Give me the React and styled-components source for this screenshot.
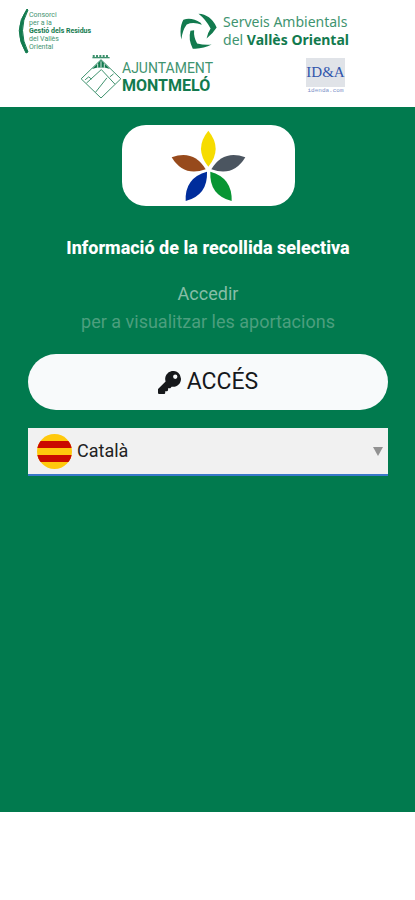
import React from "react";
import styled, { createGlobalStyle } from "styled-components";

const GlobalStyle = createGlobalStyle`
  * { box-sizing: border-box; }
  body {
    margin: 0;
    background: #fff;
    font-family: Roboto, "Liberation Sans", sans-serif;
  }
`;

const Page = styled.div`
  display: flex;
  flex-direction: column;
  min-height: 100vh;
`;

const Header = styled.header`
  display: flex;
  flex-direction: column;
  padding: 8px 0;
`;

const LogoRow = styled.div`
  display: flex;
  align-items: center;
  justify-content: space-between;
  padding: ${(p) => p.$padding};
`;

const Brand = styled.div`
  display: flex;
  align-items: center;
  gap: ${(p) => p.$gap}px;
  color: #127a4e;
`;

const BrandText = styled.div`
  display: flex;
  flex-direction: column;
  font-family: ${(p) => p.$font || "Roboto"}, sans-serif;
  font-size: ${(p) => p.$size}px;
  line-height: ${(p) => p.$line}px;
  white-space: nowrap;
`;

const Soft = styled.span`
  color: #3f9470;
`;

const TownText = styled(BrandText)`
  strong {
    font-size: 16px;
  }
`;

const IdeaLogo = styled.div`
  display: flex;
  flex-direction: column;
  align-items: center;
  width: 39px;
`;

const IdeaTile = styled.div`
  width: 100%;
  background: #e0e3e8;
  color: #3055ac;
  font: 15px/29px "Liberation Serif", serif;
  text-align: center;
`;

const IdeaSite = styled.small`
  font: 6px/8px "Liberation Mono", monospace;
  color: #7d92c8;
`;

const Main = styled.main`
  flex: 1;
  display: flex;
  flex-direction: column;
  align-items: center;
  padding: 18px 27px 0 28px;
  background: #017a4e;
`;

const Emblem = styled.div`
  display: flex;
  justify-content: center;
  width: 173px;
  height: 81px;
  padding-top: 5px;
  border-radius: 24px;
  background: #fff;
`;

const Title = styled.h1`
  margin: 28px 0 0;
  color: #fff;
  font-size: 18px;
  line-height: 28px;
  font-weight: 800;
  text-align: center;
`;

const Intro = styled.p`
  margin: 18px 0 0;
  color: #4c9f7e;
  font-size: 18px;
  line-height: 28px;
  text-align: center;
`;

const Lead = styled.span`
  display: block;
  color: #86bea7;
`;

const AccessButton = styled.button`
  display: flex;
  align-items: center;
  justify-content: center;
  gap: 6px;
  width: 100%;
  height: 56px;
  margin-top: 18px;
  border: 0;
  border-radius: 28px;
  background: #f8fafb;
  color: #16181b;
  font: 23px/28px Roboto, sans-serif;
  cursor: pointer;
`;

const LanguageField = styled.div`
  display: flex;
  align-items: center;
  width: 100%;
  height: 48px;
  margin-top: 18px;
  padding: 0 5px 0 9px;
  border-bottom: 2px solid #3a78c9;
  background: #f1f1f1;
`;

const LanguageSelect = styled.select`
  flex: 1;
  min-width: 0;
  height: 100%;
  padding: 0 0 0 5px;
  border: 0;
  outline: 0;
  appearance: none;
  background: transparent;
  color: #222;
  font: 18px/28px Roboto, sans-serif;
`;

const Footer = styled.footer`
  height: 88px;
`;

const Bracket = () => (
  <svg width="11" height="46" viewBox="0 0 11 46" aria-hidden="true">
    <path d="M9 1Q-6 22 8 45L10 44Q-1 22 10 2Z" fill="#127a4e" stroke="#127a4e" />
  </svg>
);

const Swirl = () => (
  <svg width="37" height="37" viewBox="26 40 110 110" fill="#127a4e" aria-hidden="true">
    <path d="M81 42Q99 43 112 53Q126 63 135 83Q123 102 105 116Q108 99 117 86Q103 59 81 42Z" />
    <path d="M30 119Q23 83 36 60Q61 52 87 69L91 75Q66 65 46 74Q33 91 30 119Z" />
    <path d="M57 93L68 91Q66 111 77 131Q98 136 120 134Q94 148 64 146Q50 120 57 93Z" />
  </svg>
);

const TownCrest = () => (
  <svg width="42" height="45" viewBox="30 22 124 136" fill="none" stroke="#3d916d" strokeWidth="3" aria-hidden="true">
    <path d="M92 39L152 97L92 155L32 97Z" />
    <path d="M65 67L92 40L119 67Q92 59 65 67Z" fill="#127a4e" stroke="none" />
    <path d="M82 64V51M92 62V44M102 64V51" stroke="#d9ebe3" />
    <path d="M66 33H118" strokeWidth="4" />
    <path d="M67 28H117" strokeDasharray="6 4" strokeWidth="6" />
    <path d="M48 110L93 69L134 113M76 137L110 94M44 100L55 91L63 98M119 91L130 82" />
  </svg>
);

const Flower = () => (
  <svg width="75" height="72" viewBox="181 45 225 216" aria-hidden="true">
    <path d="M293 47Q337 101 293 155Q249 101 293 47Z" fill="#f6dc00" />
    <path d="M183 127Q249 103 285 163Q219 187 183 127Z" fill="#974a1c" />
    <path d="M404 127Q338 103 302 163Q368 187 404 127Z" fill="#4b5560" />
    <path d="M225 258Q222 188 289 170Q292 240 225 258Z" fill="#002d9c" />
    <path d="M363 258Q365 188 299 170Q295 240 363 258Z" fill="#089533" />
  </svg>
);

const Key = () => (
  <svg width="23" height="23" viewBox="0 0 512 512" fill="currentColor" aria-hidden="true">
    <path d="M512 176c0 97-79 176-176 176-11 0-22-1-33-3l-24 27a24 24 0 0 1-18 8h-37v40a24 24 0 0 1-24 24h-40v40a24 24 0 0 1-24 24H24a24 24 0 0 1-24-24v-78c0-6 3-13 7-17l162-162a176 176 0 1 1 343-55zm-176-48a48 48 0 1 0 96 0 48 48 0 0 0-96 0z" />
  </svg>
);

const CatalanFlag = () => (
  <svg width="35" height="35" viewBox="0 0 35 35" aria-hidden="true">
    <clipPath id="flag-round">
      <circle cx="17.5" cy="17.5" r="17.5" />
    </clipPath>
    <g clipPath="url(#flag-round)">
      <path d="M0 0H35V35H0Z" fill="#ffc90d" />
      <path d="M0 7H35V14H0ZM0 21H35V28H0Z" fill="#ca0b00" />
    </g>
  </svg>
);

const Arrow = () => (
  <svg width="10" height="9" viewBox="0 0 10 9" aria-hidden="true">
    <path d="M0 0H10L5 9Z" fill="#929292" />
  </svg>
);

export default function App() {
  return (
    <>
      <GlobalStyle />
      <Page>
        <Header>
          <LogoRow $padding="0 66px 0 18px">
            <Brand $gap={0}>
              <Bracket />
              <BrandText $size={7} $line={8}>
                <Soft>Consorci</Soft>
                <Soft>per a la</Soft>
                <strong>Gestió dels Residus</strong>
                <Soft>del Vallès</Soft>
                <Soft>Oriental</Soft>
              </BrandText>
            </Brand>
            <Brand $gap={6}>
              <Swirl />
              <BrandText $size={14} $line={18} $font="'Noto Sans'">
                <Soft>Serveis Ambientals</Soft>
                <span>
                  <Soft>del</Soft> <strong>Vallès Oriental</strong>
                </span>
              </BrandText>
            </Brand>
          </LogoRow>
          <LogoRow $padding="0 70px 0 80px">
            <Brand $gap={0}>
              <TownCrest />
              <TownText $size={14} $line={17}>
                <Soft>AJUNTAMENT</Soft>
                <strong>MONTMELÓ</strong>
              </TownText>
            </Brand>
            <IdeaLogo>
              <IdeaTile>ID&amp;A</IdeaTile>
              <IdeaSite>idenda.com</IdeaSite>
            </IdeaLogo>
          </LogoRow>
        </Header>
        <Main>
          <Emblem>
            <Flower />
          </Emblem>
          <Title>Informació de la recollida selectiva</Title>
          <Intro>
            <Lead>Accedir</Lead>
            per a visualitzar les aportacions
          </Intro>
          <AccessButton type="button">
            <Key />
            ACCÉS
          </AccessButton>
          <LanguageField>
            <CatalanFlag />
            <LanguageSelect aria-label="Idioma" defaultValue="ca">
              <option value="ca">Català</option>
            </LanguageSelect>
            <Arrow />
          </LanguageField>
        </Main>
        <Footer />
      </Page>
    </>
  );
}
